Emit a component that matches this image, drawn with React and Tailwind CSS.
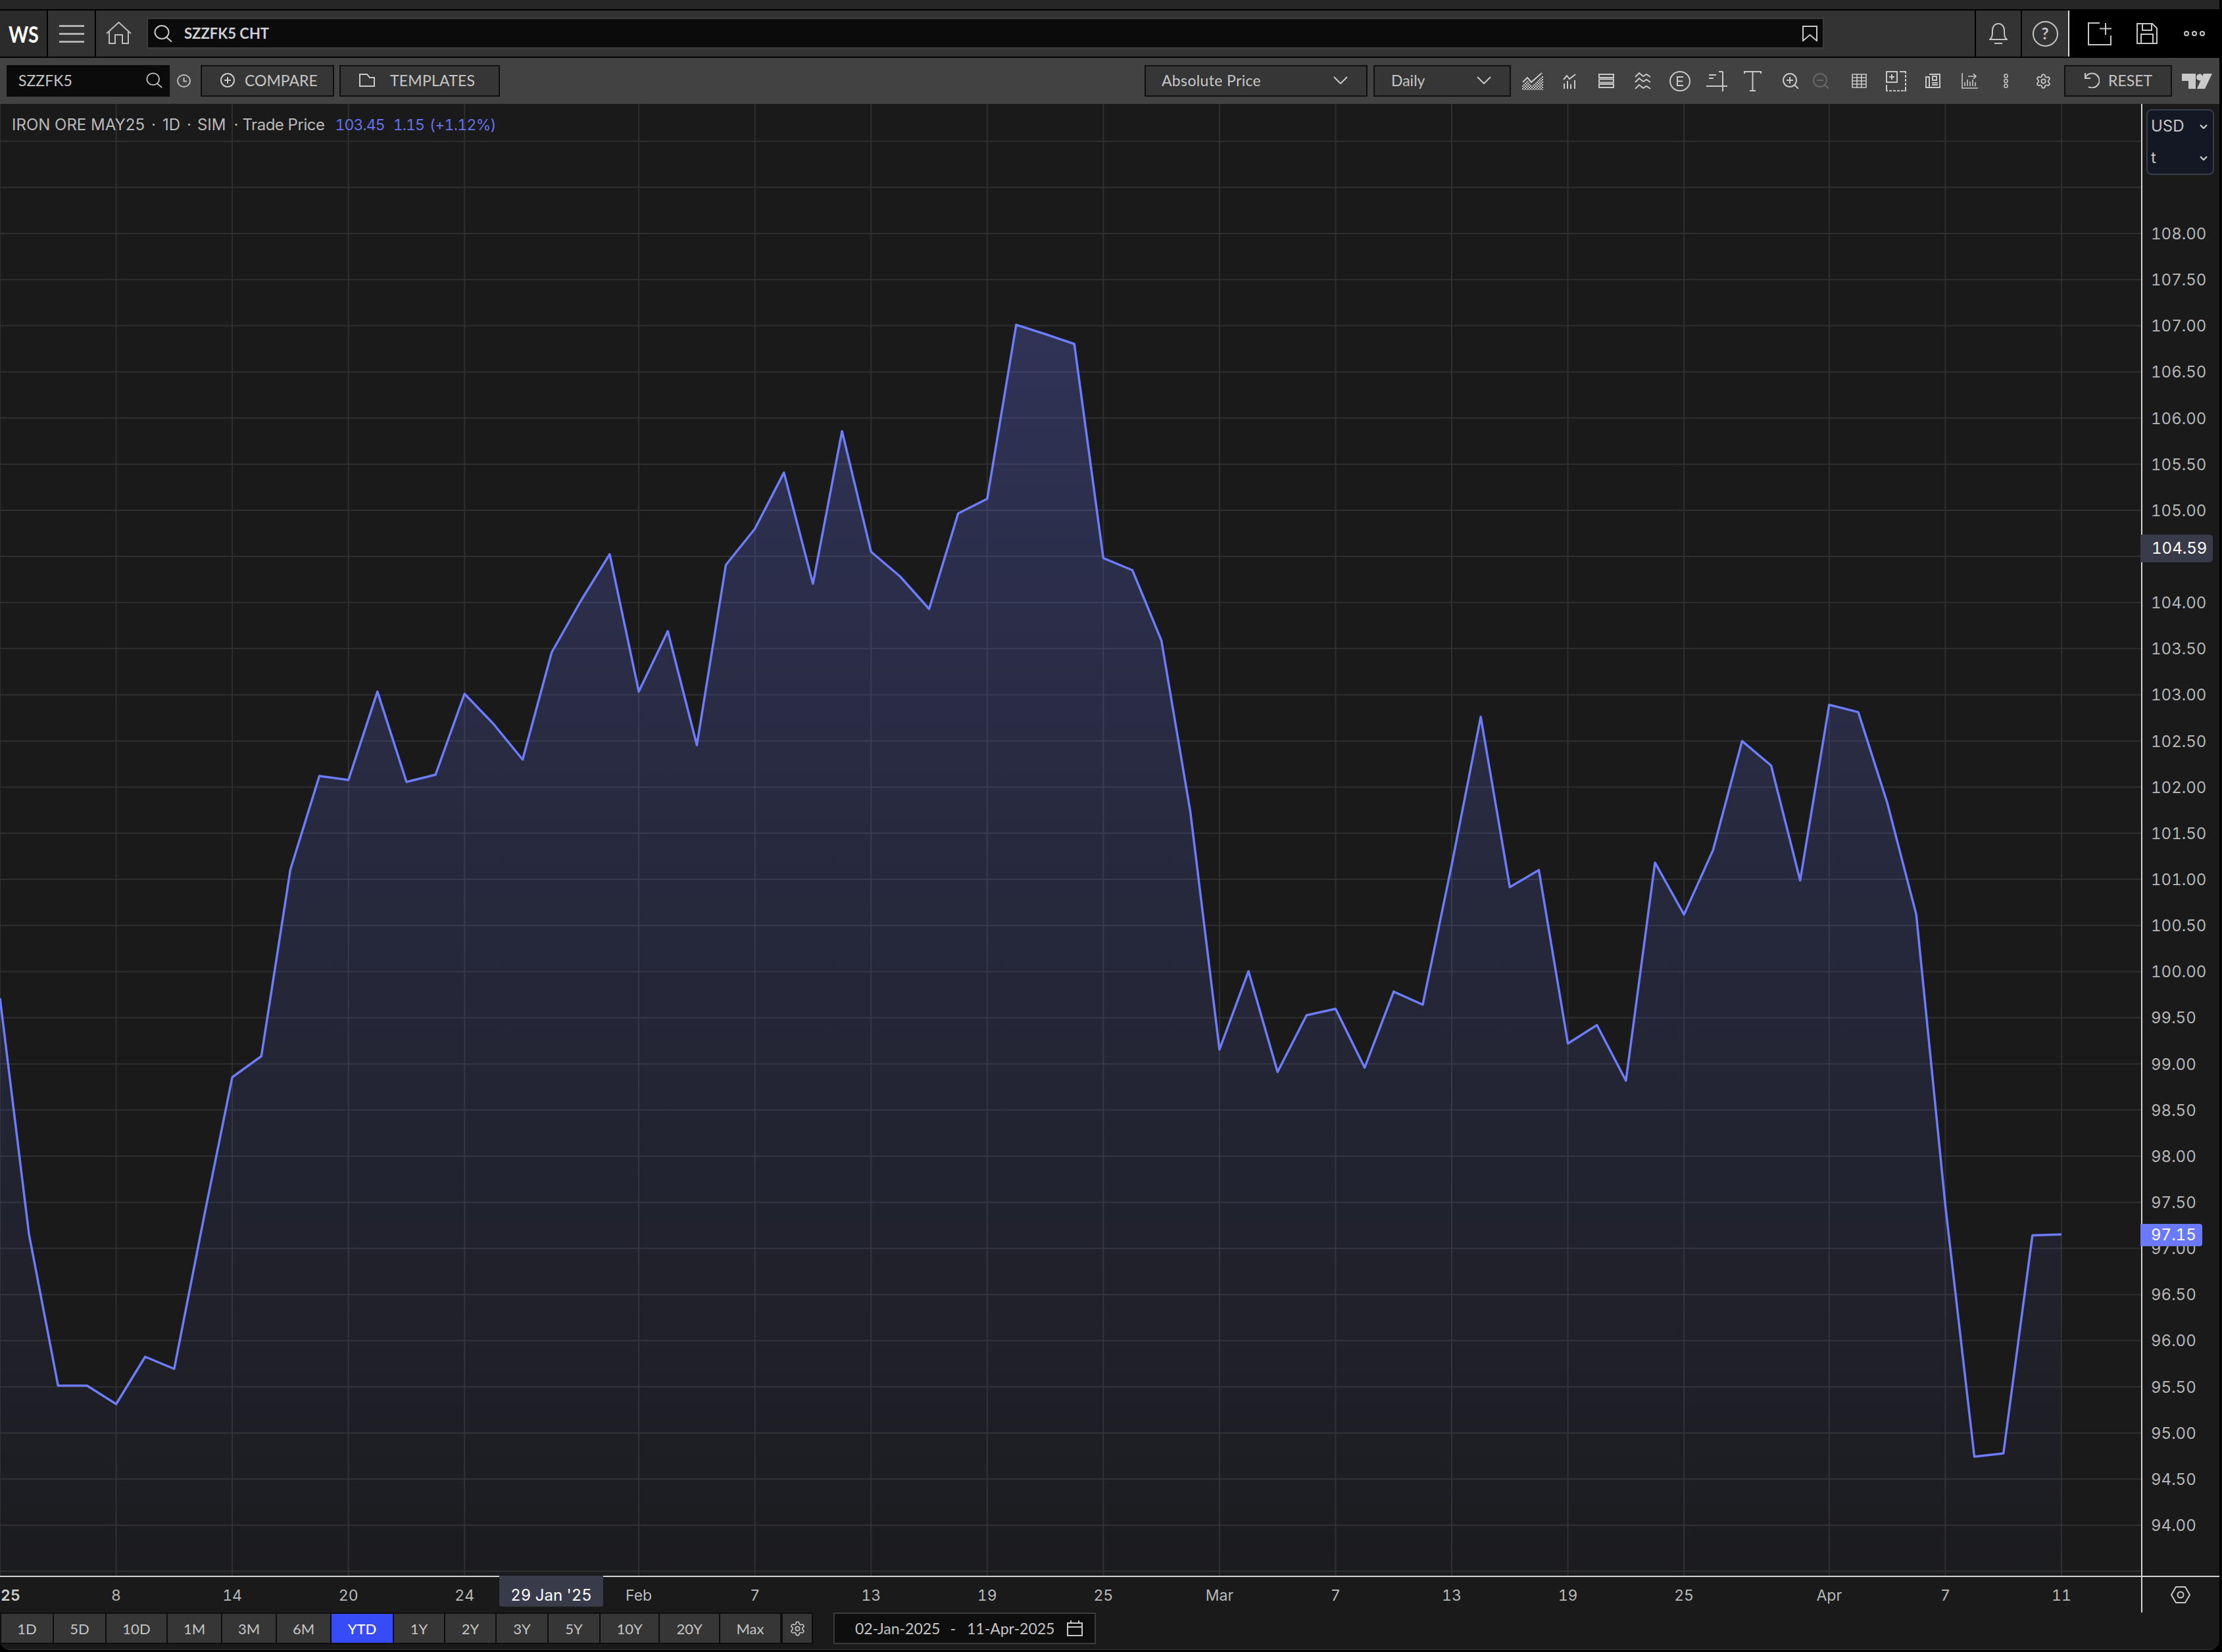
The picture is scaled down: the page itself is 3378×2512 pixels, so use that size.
import { Settings } from 'lucide-react';

// chart geometry, px in the plot box
const STEP = 44.14;
const PLOT_TOP = 158;
const priceY = (p) => 1740.3 - (p - 97) * 140.3;

// closing values as page y, one per trading day
const closes = [
  1518, 1877, 2107, 2107, 2135, 2063, 2081.5, 1856, 1638, 1606, 1322.6, 1180, 1186, 1051.6, 1189, 1178, 1055, 1101,
  1155, 992, 914, 842.7, 1051.6, 959.8, 1133, 859, 804, 718.6, 887.6, 655.7, 839, 876.5, 926, 780.8, 758.5, 493.8,
  508, 523, 848.6, 867, 973.8, 1235, 1596, 1476.8, 1630, 1543.7, 1534, 1623.5, 1507.9, 1527.7, 1315, 1090, 1349,
  1322.9, 1586.7, 1558.8, 1643.3, 1311.7, 1390.6, 1292.6, 1126.8, 1164, 1338.8, 1071.7, 1082.9, 1220.8, 1390.6, 1833,
  2214.9, 2210, 1878.5, 1877,
];
const points = closes.map((y, i) => [i * STEP, y - PLOT_TOP]);
const linePath = points.map(([x, y]) => `${x.toFixed(1)},${y.toFixed(1)}`).join(' ');
const areaPath = `0,2238 ${linePath} ${(71 * STEP).toFixed(1)},2238`;

const gridPrices = Array.from({ length: 32 }, (_, i) => 93.5 + i * 0.5);
const axisPrices = Array.from({ length: 29 }, (_, i) => (108 - i * 0.5).toFixed(2));
const timeLabels = [
  [0, '25'], [4, '8'], [8, '14'], [12, '20'], [16, '24'], [22, 'Feb'], [26, '7'], [30, '13'], [34, '19'], [38, '25'],
  [42, 'Mar'], [46, '7'], [50, '13'], [54, '19'], [58, '25'], [63, 'Apr'], [67, '7'], [71, '11'],
];

const ranges = [
  ['1D', 'w-[78px]'], ['5D', 'w-[78px]'], ['10D', 'w-[91px]'], ['1M', 'w-[81px]'], ['3M', 'w-[81px]'], ['6M', 'w-[81px]'],
  ['YTD', 'w-[93px]'], ['1Y', 'w-[76px]'], ['2Y', 'w-[76px]'], ['3Y', 'w-[77px]'], ['5Y', 'w-[77px]'], ['10Y', 'w-[88px]'],
  ['20Y', 'w-[90px]'], ['Max', 'w-[91px]'],
];

function Ico({ box, className, children, stroke = '#c9c9c9', sw = 2 }) {
  return (
    <svg viewBox={box} className={`shrink-0 ${className}`} fill="none" stroke={stroke} strokeWidth={sw}>
      {children}
    </svg>
  );
}

function Glass({ className }) {
  return (
    <Ico box="0 0 28 26" className={className}>
      <ellipse cx="12" cy="11" rx="10.5" ry="10" />
      <path d="M19 18.5 27 25.5" />
    </Ico>
  );
}

function Chevron({ className }) {
  return (
    <Ico box="0 0 22 12" className={className}>
      <path d="M1 1 11 11 21 1" />
    </Ico>
  );
}

function ToolBtn({ className, children }) {
  return <div className={`flex h-[48px] shrink-0 items-center border-2 border-[#101010] bg-[#363636] pb-[2px] text-[23px] text-[#c6c6c6] ${className}`}>{children}</div>;
}

function Header() {
  return (
    <div className="flex h-[72px] border-b-2 border-black bg-[#333333]">
      <div className="flex w-[73px] items-center justify-center border-r-2 border-black bg-[#2b2b2b]">
        <span className="scale-x-[0.82] text-[35px] font-bold text-white">WS</span>
      </div>
      <div className="flex w-[73px] flex-col items-center justify-center gap-[9px] border-r-2 border-black">
        <div className="h-[3px] w-[38px] bg-[#b0b0b0]" />
        <div className="h-[3px] w-[38px] bg-[#b0b0b0]" />
        <div className="h-[3px] w-[38px] bg-[#b0b0b0]" />
      </div>
      <Ico box="0 0 39 34" className="ml-[15px] mt-[17px] h-[34px] w-[39px]" stroke="#bdbdbd">
        <path d="M1 18 19.5 1 38 18M5 14V33H14V20H25V33H34V14" />
      </Ico>
      <div className="ml-[23px] mt-[11px] flex h-[47px] w-[2550px] items-center border-2 border-[#3c3c3c] bg-[#0b0b0b]">
        <Glass className="ml-[9px] h-[26px] w-[28px]" />
        <span className="ml-[18px] text-[22px] font-bold text-[#d0d0d0]">SZZFK5 CHT</span>
        <Ico box="0 0 23 24" className="ml-auto mr-[8px] h-[24px] w-[23px]">
          <path d="M1 1H22V23L11.5 14 1 23Z" />
        </Ico>
      </div>
      <div className="ml-[229px] flex w-[72px] items-center justify-center border-x-2 border-black">
        <Ico box="0 0 28 32" className="h-[32px] w-[28px]" stroke="#c4c4c4">
          <path d="M1 25C5 22 5 18 5 11 5 5 9 1 14 1S23 5 23 11C23 18 23 22 27 25ZM8 31H20" />
        </Ico>
      </div>
      <div className="flex w-[70px] items-center justify-center">
        <div className="flex h-[39px] w-[39px] items-center justify-center rounded-full border-2 border-[#c4c4c4] text-[24px] font-bold text-[#c4c4c4]">?</div>
      </div>
      <div className="flex flex-1 items-center border-l-2 border-[#dedede] bg-black">
        <Ico box="0 0 37 35" className="ml-[28px] h-[35px] w-[37px]">
          <path d="M18 1H1V34H35V20M27 1V19M18 9.5H36" />
        </Ico>
        <Ico box="0 0 32 32" className="ml-[37px] h-[32px] w-[32px]">
          <path d="M1 1H24L31 8V31H1ZM9 1V11H23V1M7 31V17H25V31" />
        </Ico>
        <Ico box="0 0 32 8" className="ml-[40px] h-[8px] w-[32px]">
          <circle cx="4" cy="4" r="3" />
          <circle cx="16" cy="4" r="3" />
          <circle cx="28" cy="4" r="3" />
        </Ico>
      </div>
    </div>
  );
}

function Toolbar() {
  return (
    <div className="flex h-[70px] items-center bg-[#424242] pl-[10px] pr-[11px]">
      <div className="flex h-[48px] w-[248px] shrink-0 items-center bg-[#0b0b0b] pb-[2px] pl-[18px] pr-[11px] text-[23px] text-[#c6c6c6]">
        SZZFK5
        <Glass className="ml-auto h-[24px] w-[25px]" />
      </div>
      <Ico box="0 0 21 20" className="ml-[11px] h-[20px] w-[21px]" stroke="#bdbdbd">
        <ellipse cx="10.5" cy="10" rx="9.5" ry="9" />
        <path d="M10.5 5V10.5H15" />
      </Ico>
      <ToolBtn className="ml-[15px] w-[203px] pl-[28px]">
        <Ico box="0 0 22 22" className="h-[22px] w-[22px]">
          <circle cx="11" cy="11" r="10" />
          <path d="M11 6V16M6 11H16" />
        </Ico>
        <span className="ml-[15px]">COMPARE</span>
      </ToolBtn>
      <ToolBtn className="ml-[8px] w-[244px] pl-[28px]">
        <Ico box="0 0 24 20" className="h-[20px] w-[24px]">
          <path d="M1 1H12L16 6H23V19H1Z" />
        </Ico>
        <span className="ml-[23px] tracking-[0.01em]">TEMPLATES</span>
      </ToolBtn>
      <div className="flex-1" />
      <ToolBtn className="w-[339px] pl-[24px]">
        <span className="tracking-[0.015em]">Absolute Price</span>
        <Chevron className="ml-auto mr-[28px] h-[12px] w-[22px]" />
      </ToolBtn>
      <ToolBtn className="ml-[9px] w-[209px] pl-[25px]">
        Daily
        <Chevron className="ml-auto mr-[28px] h-[12px] w-[22px]" />
      </ToolBtn>
      <Ico box="0 0 32 27" className="ml-[17px] h-[27px] w-[32px]">
        <defs>
          <pattern id="chk" width="4" height="4" patternUnits="userSpaceOnUse">
            <rect width="2" height="2" fill="#c9c9c9" stroke="none" />
            <rect x="2" y="2" width="2" height="2" fill="#c9c9c9" stroke="none" />
          </pattern>
        </defs>
        <path d="M0 20 8 12 15 20 32 4V27H0Z" fill="url(#chk)" stroke="none" />
        <path d="M1 15 8 8 14 15 30 1" />
      </Ico>
      <Ico box="0 0 20 23" className="ml-[30px] h-[23px] w-[20px]">
        <path d="M1 9 6 3 10 8 19 1M2 23V15M7 23V11M12 23V16M18 23V10" />
      </Ico>
      <Ico box="0 0 24 22" className="ml-[34px] h-[22px] w-[24px]">
        <path d="M1 1H23V6H1ZM1 8.5H23V13.5H1ZM1 16H23V21H1Z" />
      </Ico>
      <Ico box="0 0 25 26" className="ml-[31px] h-[26px] w-[25px]">
        <path d="M1 7 7 1 13 6 18 3 24 7M1 15 7 9 13 14 18 11 24 15M1 25 7 19 13 24 18 21 24 25" />
      </Ico>
      <Ico box="0 0 32 31" className="ml-[28px] h-[31px] w-[32px]">
        <ellipse cx="16" cy="15.5" rx="15" ry="14.5" />
        <path d="M21 9H12V22H21M12 15.5H20" />
      </Ico>
      <Ico box="0 0 32 31" className="ml-[24px] h-[31px] w-[32px]">
        <path d="M25 1V31M0 23H32M19 1H25M4 6H15M4 11H11" />
      </Ico>
      <Ico box="0 0 27 31" className="ml-[25px] h-[31px] w-[27px]">
        <path d="M1 4V1H26V4M13.5 1V30M9 30H18" />
      </Ico>
      <Ico box="0 0 25 24" className="ml-[32px] h-[24px] w-[25px]">
        <circle cx="11" cy="11" r="10" />
        <path d="M11 6V16M6 11H16M18 18 24 24" />
      </Ico>
      <Ico box="0 0 25 24" className="ml-[21px] h-[24px] w-[25px]" stroke="#686868">
        <circle cx="11" cy="11" r="10" />
        <path d="M6 11H16M18 18 24 24" />
      </Ico>
      <Ico box="0 0 23 22" className="ml-[34px] h-[22px] w-[23px]" sw={1.6}>
        <path d="M1 1H22V21H1ZM1 6H22M1 11H22M1 16H22M8 1V21M15 1V21" />
      </Ico>
      <Ico box="0 0 31 31" className="ml-[29px] h-[31px] w-[31px]">
        <path d="M1 1H17V17H1ZM9 5V13M5 9H13M21 1H30V30H1V21" />
        <path d="M30 4V28M3 30H28" stroke="#424242" strokeDasharray="2 4" />
      </Ico>
      <Ico box="0 0 23 22" className="ml-[29px] h-[22px] w-[23px]">
        <path d="M6 1H22V21H1V5H6V21M11 4H17V10H11ZM10 14H19M10 17H19" />
      </Ico>
      <Ico box="0 0 25 24" className="ml-[32px] h-[24px] w-[25px]" sw={1.6}>
        <path d="M1 0V23H25M10 5H21M18 1 22 5 18 9M5 20V14M9 20V10M13 20V13M17 20V10M21 20V14" />
      </Ico>
      <Ico box="0 0 7 22" className="ml-[39px] h-[22px] w-[7px]" sw={1.5}>
        <circle cx="3.5" cy="3.5" r="2.6" />
        <circle cx="3.5" cy="11" r="2.6" />
        <circle cx="3.5" cy="18.5" r="2.6" />
      </Ico>
      <Settings className="ml-[41px] h-[25px] w-[25px] shrink-0 text-[#c9c9c9]" strokeWidth={1.7} />
      <ToolBtn className="ml-[19px] w-[164px] pl-[27px]">
        <Ico box="0 0 25 24" className="h-[24px] w-[25px]">
          <path d="M3 9A11 11 0 1 1 8 22M3 1V9H11" />
        </Ico>
        <span className="ml-[13px]">RESET</span>
      </ToolBtn>
      <svg viewBox="0 0 46 23" className="ml-[15px] h-[23px] w-[46px] shrink-0" fill="#c9c9c9">
        <path d="M0 0H21V23H10V11H0Z" />
        <circle cx="27" cy="5.5" r="5" />
        <path d="M33 0H46L35 23H23Z" />
      </svg>
    </div>
  );
}

function Plot() {
  const verticals = timeLabels.map(([i]) => i * STEP);
  return (
    <div className="relative w-[3255px] shrink-0 overflow-hidden">
      <svg viewBox="0 0 3255 2238" className="block h-[2238px] w-[3255px]" fill="none">
        <defs>
          <linearGradient id="fade" gradientUnits="userSpaceOnUse" x1="0" y1="330" x2="0" y2="2238">
            <stop offset="0" stopColor="#6b79ff" stopOpacity="0.26" />
            <stop offset="1" stopColor="#6b79ff" stopOpacity="0.02" />
          </linearGradient>
        </defs>
        {gridPrices.map((p) => (
          <line key={p} x1="0" x2="3255" y1={priceY(p)} y2={priceY(p)} stroke="#2f2f2f" strokeWidth="2" />
        ))}
        {verticals.map((x) => (
          <line key={x} x1={x} x2={x} y1="0" y2="2238" stroke="#2f2f2f" strokeWidth="2" />
        ))}
        <polygon points={areaPath} fill="url(#fade)" />
        <polyline points={linePath} stroke="#6c7cfa" strokeWidth="3.5" strokeLinejoin="round" />
      </svg>
      <div className="absolute left-[18px] top-[14px] flex items-center text-[24px] text-[#b9b9b9]">
        <span>IRON ORE MAY25</span>
        <span className="ml-[10px]">·</span>
        <span className="ml-[10px]">1D</span>
        <span className="ml-[10px]">·</span>
        <span className="ml-[9px]">SIM</span>
        <span className="ml-[12px]">·</span>
        <span className="ml-[6px] tracking-[-0.02em]">Trade Price</span>
        <span className="ml-[16px] text-[23px] tabular-nums tracking-[-0.04em] text-[#6472ec]">103.45</span>
        <span className="ml-[13px] text-[23px] tabular-nums tracking-[-0.04em] text-[#6472ec]">1.15</span>
        <span className="ml-[8px] text-[23px] tabular-nums tracking-[-0.03em] text-[#6472ec]">(+1.12%)</span>
      </div>
    </div>
  );
}

function PriceAxis() {
  return (
    <div className="relative flex-1 tabular-nums">
      <div className="ml-[6px] mt-[8px] h-[100px] w-[103px] rounded-[8px] border-2 border-[#383d4c] bg-[#141724] pl-[5px] text-[24px] text-[#c6c6c6]">
        <div className="flex h-[48px] items-center pr-[8px]">
          USD
          <Ico box="0 0 12 7" className="ml-auto h-[7px] w-[12px]" sw={2.4}>
            <path d="M1 1 6 6 11 1" />
          </Ico>
        </div>
        <div className="flex h-[48px] items-center pr-[8px]">
          t
          <Ico box="0 0 12 7" className="ml-auto h-[7px] w-[12px]" sw={2.4}>
            <path d="M1 1 6 6 11 1" />
          </Ico>
        </div>
      </div>
      <div className="mt-[54px] flex flex-col pl-[13px] pt-[1px] text-[24px] text-[#b5b5b5]">
        {axisPrices.map((p) => (
          <div key={p} className="flex h-[70.15px] items-center">{p}</div>
        ))}
      </div>
      <div className="absolute left-[-3px] top-[655px] flex h-[42px] w-[110px] items-center rounded-r-[5px] bg-[#393b4a] pl-[17px] text-[24px] text-white">104.59</div>
      <div className="absolute left-[-3px] top-[1703px] flex h-[34px] w-[94px] items-center rounded-r-[4px] bg-[#6b79ff] pl-[16px] text-[24px] text-white">97.15</div>
    </div>
  );
}

function TimeAxis() {
  return (
    <div className="flex h-[54px]">
      <div className="relative w-[3255px] shrink-0 text-[23px] tabular-nums text-[#b9b9b9]">
        {timeLabels.map(([i, label]) =>
          i === 0 ? (
            <span key={i} className="absolute left-[1px] top-[11px] font-semibold text-[#cfcfcf]">{label}</span>
          ) : (
            <span key={i} className="absolute top-[11px] -translate-x-1/2" style={{ left: i * STEP }}>{label}</span>
          ),
        )}
        <div className="absolute left-[759px] top-[-2px] flex h-[47px] w-[158px] items-center justify-center rounded-b-[4px] bg-[#393b4a] pt-[13px] text-[24px] text-white">29 Jan '25</div>
      </div>
      <div className="w-[2px] shrink-0 bg-[#d4d4d4]" />
      <div className="flex flex-1 items-start pl-[43px] pt-[14px]">
        <Ico box="0 0 30 26" className="h-[26px] w-[30px]">
          <path d="M8 1H22L29 13 22 25H8L1 13Z" />
          <circle cx="15" cy="13" r="4.5" />
        </Ico>
      </div>
    </div>
  );
}

function RangeBar() {
  return (
    <div className="flex items-start">
      <div className="flex h-[48px] items-center gap-[2px] bg-[#0e0e0e] px-[2px] text-[22px] text-[#c4c4c4]">
        {ranges.map(([label, w]) => (
          <div key={label} className={`flex h-[44px] items-center justify-center ${w} ${label === 'YTD' ? 'bg-[#374cf7] font-medium text-white' : 'bg-[#363636]'}`}>
            {label}
          </div>
        ))}
        <div className="ml-[2px] flex h-[44px] w-[44px] items-center justify-center bg-[#363636]">
          <Settings className="h-[25px] w-[25px]" strokeWidth={1.6} />
        </div>
      </div>
      <div className="ml-[31px] flex h-[48px] w-[399px] items-center border-2 border-[#3a3a3a] bg-[#0e0e0e] pl-[31px] text-[23px] text-[#c4c4c4]">
        02-Jan-2025
        <span className="ml-[15px]">-</span>
        <span className="ml-[17px]">11-Apr-2025</span>
        <Ico box="0 0 24 24" className="ml-[19px] h-[24px] w-[24px]">
          <path d="M1 4H23V23H1ZM1 10H23M6 0V4M18 0V4" />
        </Ico>
      </div>
    </div>
  );
}

export default function App() {
  return (
    <div className="h-[2512px] w-[3378px] overflow-hidden bg-black">
      <div className="flex h-[2509px] w-[3374px] flex-col overflow-hidden rounded-b-[16px] border-b border-[#333333] bg-[#1a1a1a] [font-family:Lato,sans-serif]">
        <div className="h-[16px] shrink-0 border-b-2 border-black bg-[#262626]" />
        <Header />
        <Toolbar />
        <div className="flex h-[2238px] shrink-0 [font-family:Inter,sans-serif]">
          <Plot />
          <div className="w-[2px] shrink-0 bg-[#d4d4d4]" />
          <PriceAxis />
        </div>
        <div className="h-[2px] shrink-0 bg-[#d4d4d4]" />
        <div className="[font-family:Inter,sans-serif]">
          <TimeAxis />
        </div>
        <RangeBar />
      </div>
    </div>
  );
}
